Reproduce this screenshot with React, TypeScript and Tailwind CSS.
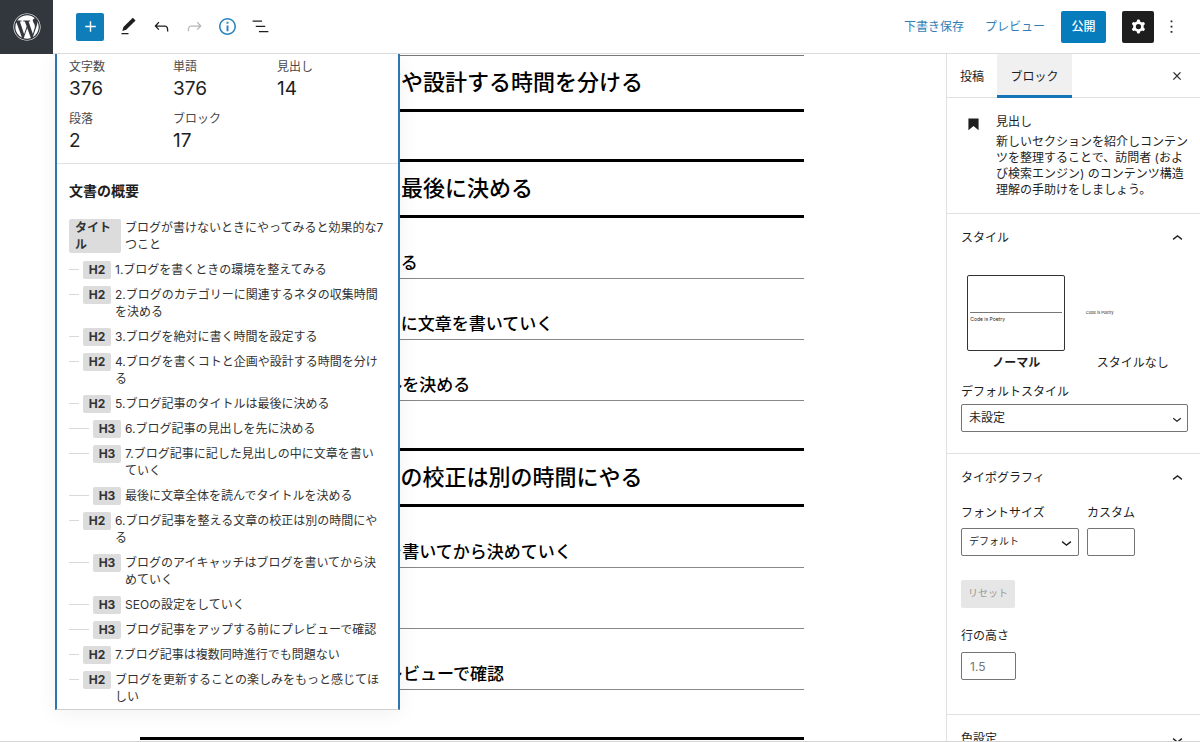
import React from "react";
import { FaWordpress } from "react-icons/fa";

const icons = {
  plus: "M18 11.2h-5.2V6h-1.6v5.2H6v1.6h5.2V18h1.6v-5.2H18z",
  edit: "M20.1 5.1L16.9 2 6.2 12.7l-1.3 4.4 4.5-1.3L20.1 5.1zM4 20.8h8v-1.5H4v1.5z",
  undo: "M18.3 11.7c-.6-.6-1.4-.9-2.3-.9H6.7l2.9-3.3-1.1-1-4.5 5L8.5 16l1-1-2.7-2.7H16c.5 0 .9.2 1.3.5 1 1 1 3.4 1 4.5v.3h1.5v-.2c0-1.5 0-4.3-1.5-5.7z",
  redo: "M15.6 6.5l-1.1 1 2.9 3.3H8c-.9 0-1.7.3-2.3.9-1.4 1.5-1.4 4.2-1.4 5.6v.2h1.5v-.3c0-1.1 0-3.5 1-4.5.3-.3.7-.5 1.3-.5h9.2L14.5 15l1.1 1.1 4.6-4.6-4.6-5z",
  info: "M12 3.2c-4.8 0-8.8 3.9-8.8 8.8 0 4.8 3.9 8.8 8.8 8.8 4.8 0 8.8-3.9 8.8-8.8 0-4.8-4-8.8-8.8-8.8zm0 16c-4 0-7.2-3.3-7.2-7.2C4.8 8 8 4.8 12 4.8s7.2 3.3 7.2 7.2c0 4-3.2 7.2-7.2 7.2zM11 17h2v-6h-2v6zm0-8h2V7h-2v2z",
  list: "M13.8 5.2H3v1.5h10.8V5.2zm-3.6 12v1.5H21v-1.5H10.2zm7.2-6H6.6v1.5h10.8v-1.5z",
  cog: "M10.289 4.836A1 1 0 0111.275 4h1.306a1 1 0 01.987.836l.244 1.466c.787.26 1.503.679 2.108 1.218l1.393-.522a1 1 0 011.216.437l.653 1.13a1 1 0 01-.23 1.273l-1.148.944a6.025 6.025 0 010 2.435l1.149.946a1 1 0 01.23 1.272l-.653 1.13a1 1 0 01-1.216.437l-1.394-.522c-.605.54-1.32.958-2.108 1.218l-.244 1.466a1 1 0 01-.987.836h-1.306a1 1 0 01-.986-.836l-.244-1.466a5.995 5.995 0 01-2.108-1.218l-1.394.522a1 1 0 01-1.217-.436l-.653-1.131a1 1 0 01.23-1.272l1.149-.946a6.026 6.026 0 010-2.435l-1.148-.944a1 1 0 01-.23-1.272l.653-1.131a1 1 0 011.217-.437l1.393.522a5.994 5.994 0 012.108-1.218l.244-1.466zM14.929 12a3 3 0 11-6 0 3 3 0 016 0z",
  more: "M13 19h-2v-2h2v2zm0-6h-2v-2h2v2zm0-6h-2V5h2v2z",
  close: "M13 11.8l6.1-6.3-1-1-6.1 6.2-6.1-6.2-1 1 6.1 6.3-6.5 6.7 1 1 6.5-6.6 6.5 6.6 1-1z",
  heading: "M6.2 5.2v13.4l5.8-4.8 5.8 4.8V5.2z",
  up: "M6.5 12.4L12 8l5.5 4.4-.9 1.2L12 10l-4.5 3.6-1-1.2z",
  down: "M17.5 11.6L12 16l-5.5-4.4.9-1.2L12 14l4.5-3.6 1 1.2z",
};

const stats = [
  { label: "文字数", value: 376 },
  { label: "単語", value: 376 },
  { label: "見出し", value: 14 },
  { label: "段落", value: 2 },
  { label: "ブロック", value: 17 },
];

const outline = [
  { level: "H2", text: "1.ブログを書くときの環境を整えてみる" },
  { level: "H2", text: "2.ブログのカテゴリーに関連するネタの収集時間を決める" },
  { level: "H2", text: "3.ブログを絶対に書く時間を設定する" },
  { level: "H2", text: "4.ブログを書くコトと企画や設計する時間を分ける" },
  { level: "H2", text: "5.ブログ記事のタイトルは最後に決める" },
  { level: "H3", text: "6.ブログ記事の見出しを先に決める" },
  { level: "H3", text: "7.ブログ記事に記した見出しの中に文章を書いていく" },
  { level: "H3", text: "最後に文章全体を読んでタイトルを決める" },
  { level: "H2", text: "6.ブログ記事を整える文章の校正は別の時間にやる" },
  { level: "H3", text: "ブログのアイキャッチはブログを書いてから決めていく" },
  { level: "H3", text: "SEOの設定をしていく" },
  { level: "H3", text: "ブログ記事をアップする前にプレビューで確認" },
  { level: "H2", text: "7.ブログ記事は複数同時進行でも問題ない" },
  { level: "H2", text: "ブログを更新することの楽しみをもっと感じてほしい" },
];

function Icon({ path, className = "" }: { path: string; className?: string }) {
  return (
    <svg viewBox="0 0 24 24" width="21" height="21" fill="currentColor" fillRule="evenodd" className={`shrink-0 ${className}`} aria-hidden="true">
      <path d={path} />
    </svg>
  );
}

function ToolButton({ label, path, className = "", size }: { label: string; path: string; className?: string; size?: string }) {
  return (
    <button aria-label={label} className={`flex h-8 w-[33px] items-center justify-center ${className}`}>
      <Icon path={path} className={size} />
    </button>
  );
}

function Header() {
  return (
    <header className="flex h-[54px] shrink-0 items-center border-b border-[#dcdcdc]">
      <a href="#" aria-label="投稿一覧" className="-mb-px flex h-[54px] w-[53px] items-center justify-center bg-[#32373d] text-white">
        <FaWordpress className="size-7" />
      </a>
      <button aria-label="ブロックを追加" className="ml-[23px] flex size-7 items-center justify-center rounded-xs bg-[#107dbb] text-white">
        <Icon path={icons.plus} />
      </button>
      <div className="ml-2 flex">
        <ToolButton label="ツール" path={icons.edit} />
        <ToolButton label="元に戻す" path={icons.undo} />
        <ToolButton label="やり直す" path={icons.redo} className="text-[#b8b8b8]" />
        <ToolButton label="詳細" path={icons.info} className="text-[#2a83c0]" size="size-[23px]" />
        <ToolButton label="リスト表示" path={icons.list} />
      </div>
      <div className="ml-auto flex items-center pr-5">
        <button className="text-[#317eb6]">下書き保存</button>
        <button className="ml-[21px] text-[#317eb6]">プレビュー</button>
        <button className="ml-4 h-8 w-[45px] rounded-xs bg-[#067cbc] font-medium text-white">公開</button>
        <button aria-label="設定" className="ml-4 flex size-8 items-center justify-center rounded-xs bg-[#1e1e1e] text-white">
          <Icon path={icons.cog} />
        </button>
        <button aria-label="オプション" className="ml-2 flex h-8 w-[18px] items-center justify-center">
          <Icon path={icons.more} />
        </button>
      </div>
    </header>
  );
}

function DocumentInfo() {
  return (
    <div className="absolute top-0 left-[55px] w-[345px] border-x-2 border-b border-x-[#2f76ac] border-b-[#cfcfcf] bg-white shadow-[0_3px_20px_rgba(0,0,0,0.06)]">
      <dl className="grid h-[110px] grid-cols-[104px_104px_104px] content-start gap-y-2 border-b border-[#dfe2e2] pt-[5px] pl-3">
        {stats.map((s) => (
          <div key={s.label}>
            <dt className="leading-4 text-[#4a4a4a]">{s.label}</dt>
            <dd className="text-[19px] leading-7 text-[#1e1e1e]">{s.value}</dd>
          </div>
        ))}
      </dl>
      <div className="pt-4 pr-[13px] pl-3">
        <h2 className="mb-[17px] text-sm leading-[22px] font-semibold">文書の概要</h2>
        <ul className="-mb-1 leading-[17px] text-[#333]">
          <li className="flex items-start">
            <strong className="mr-1 w-[52px] shrink-0 rounded-xs bg-[#dcdcdc] px-1.5">タイトル</strong>
            <a href="#title" className="pb-2">ブログが書けないときにやってみると効果的な7つこと</a>
          </li>
          {outline.map((item, i) => (
            <li key={i} className="flex items-start">
              <span className={`mt-2 mr-1 h-px shrink-0 bg-[#d9d9d9] ${item.level === "H2" ? "w-2.5" : "w-5"}`} />
              <strong className="mr-1 h-[18px] w-7 shrink-0 rounded-xs bg-[#dcdcdc] text-center">{item.level}</strong>
              <a href={`#heading-${i}`} className="pb-2">{item.text}</a>
            </li>
          ))}
        </ul>
      </div>
    </div>
  );
}

function Heading2({ children }: { children?: React.ReactNode }) {
  return (
    <h2 className="flex h-[59px] items-center border-y-3 border-black pb-1 text-[22px] font-medium text-black">
      {children}
    </h2>
  );
}

function Heading3({ children }: { children: React.ReactNode }) {
  return (
    <h3 className="flex h-[61px] items-end border-b border-[#888] pb-[3px] pl-2 text-[17px] leading-[26px] font-medium text-black">
      {children}
    </h3>
  );
}

function Canvas() {
  return (
    <main className="relative min-w-0 flex-1 overflow-hidden pr-[142px] pl-[140px]">
      <article className="mx-auto flex max-w-[664px] flex-col whitespace-nowrap pt-px font-['Noto_Sans_CJK_JP',sans-serif]">
        <h2 className="flex h-[57px] items-center border-t border-b-3 border-t-[#777] border-b-black pb-1 text-[22px] font-medium text-black">
          4.ブログを書くコトと企画や設計する時間を分ける
        </h2>
        <p className="h-[47px]" />
        <Heading2>5.ブログ記事のタイトルは最後に決める</Heading2>
        <Heading3>6.ブログ記事の見出しを先に決める</Heading3>
        <Heading3>7.ブログ記事に記した見出しの中に文章を書いていく</Heading3>
        <Heading3>最後に文章全体を読んでタイトルを決める</Heading3>
        <p className="h-[47px]" />
        <Heading2>6.ブログ記事を整える文章の校正は別の時間にやる</Heading2>
        <Heading3>ブログのアイキャッチはブログを書いてから決めていく</Heading3>
        <Heading3>SEOの設定をしていく</Heading3>
        <Heading3>ブログ記事をアップする前にプレビューで確認</Heading3>
        <p className="h-[47px]" />
        <Heading2 />
      </article>
      <DocumentInfo />
    </main>
  );
}

function PanelTitle({ title, open = true }: { title: string; open?: boolean }) {
  return (
    <h2>
      <button aria-expanded={open} className="flex h-12 w-full items-center justify-between">
        {title}
        <Icon path={open ? icons.up : icons.down} />
      </button>
    </h2>
  );
}

function SelectBox({ id, value, small = false }: { id: string; value: string; small?: boolean }) {
  return (
    <div className="relative">
      <select
        id={id}
        className={`h-7 w-full appearance-none rounded-xs border border-[#757575] bg-white px-[7px] ${small ? "text-[10px]" : ""}`}
      >
        <option>{value}</option>
      </select>
      <Icon path={icons.down} className={`pointer-events-none absolute right-0.5 ${small ? "top-1" : "top-1.5 size-[18px]"}`} />
    </div>
  );
}

function Sidebar() {
  return (
    <aside className="w-[254px] shrink-0 overflow-hidden border-l border-[#e0e0e0]">
      <div className="flex h-11 items-stretch border-b border-[#e0e0e0]">
        <button className="w-[50px] pt-0.5">投稿</button>
        <button className="-mb-px w-[75px] border-b-3 border-[#1476b8] bg-[#f0f0f0] pt-1">ブロック</button>
        <button aria-label="設定を閉じる" className="mr-3 ml-auto flex w-[22px] items-center justify-center">
          <Icon path={icons.close} className="size-3 stroke-current" />
        </button>
      </div>

      <section className="flex h-[116px] items-start border-b border-[#e0e0e0] pt-4 pr-2 pl-4">
        <Icon path={icons.heading} className="mr-3" />
        <div className="min-w-0 flex-1 leading-4">
          <h2 className="mb-1">見出し</h2>
          <p>新しいセクションを紹介しコンテンツを整理することで、訪問者 (および検索エンジン) のコンテンツ構造理解の手助けをしましょう。</p>
        </div>
      </section>

      <section className="h-60 border-b border-[#e0e0e0] pr-3 pl-3.5">
        <PanelTitle title="スタイル" />
        <div className="mt-[13px] grid grid-cols-2 gap-1.5">
          <button className="flex flex-col items-center leading-6 font-bold">
            <span className="flex h-[76px] w-[98px] flex-col rounded-xs border border-[#333] px-0.5 pt-9 text-left text-[5px] leading-3 font-normal">
              <span className="border-t border-[#777]">Code is Poetry</span>
            </span>
            ノーマル
          </button>
          <button className="flex flex-col items-center leading-6">
            <span className="flex h-[76px] w-[98px] items-center px-0.5 text-[4px]">Code is Poetry</span>
            スタイルなし
          </button>
        </div>
        <label htmlFor="default-style" className="mt-[9px] mb-1 block leading-4">デフォルトスタイル</label>
        <SelectBox id="default-style" value="未設定" />
      </section>

      <section className="h-[261px] border-b border-[#e0e0e0] pr-3 pl-3.5">
        <PanelTitle title="タイポグラフィ" />
        <div className="mt-[3px] flex gap-2">
          <div className="w-[118px]">
            <label htmlFor="font-size" className="mb-[7px] block leading-4">フォントサイズ</label>
            <SelectBox id="font-size" value="デフォルト" small />
          </div>
          <div>
            <label htmlFor="custom-size" className="mb-[7px] block leading-4">カスタム</label>
            <input id="custom-size" className="h-7 w-12 rounded-xs border border-[#757575] px-2" />
          </div>
        </div>
        <button disabled className="mt-6 h-7 w-[54px] rounded-xs bg-[#e6e6e6] text-[10px] text-[#999]">リセット</button>
        <label htmlFor="line-height" className="mt-5 mb-2 block leading-4">行の高さ</label>
        <input id="line-height" placeholder="1.5" className="h-7 w-[55px] rounded-xs border border-[#757575] px-2 placeholder:text-[#757575]" />
      </section>

      <section className="pr-3 pl-3.5">
        <PanelTitle title="色設定" open={false} />
      </section>
    </aside>
  );
}

export default function App() {
  return (
    <div lang="ja" className="flex h-screen flex-col overflow-hidden border-b border-[#d5d5d5] bg-white font-['Inter','Noto_Sans_CJK_JP',sans-serif] text-xs text-[#1e1e1e]">
      <Header />
      <div className="flex min-h-0 flex-1">
        <Canvas />
        <Sidebar />
      </div>
    </div>
  );
}
